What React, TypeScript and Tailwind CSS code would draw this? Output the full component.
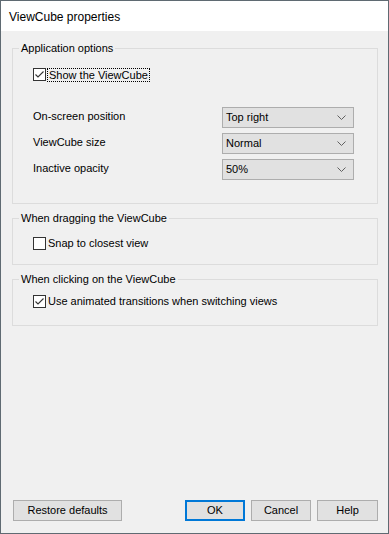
import React from 'react'

const font = { fontFamily: '"Liberation Sans", Arial, sans-serif' }

function CheckBox({ checked }: { checked: boolean }) {
  return (
    <span className="w-[13px] h-[13px] border border-[#333333] bg-white flex items-center justify-center shrink-0">
      {checked && (
        <svg width="11" height="11" viewBox="0 0 11 11">
          <path d="M1.5 5.5 L4 8 L9.5 2.5" fill="none" stroke="#333333" strokeWidth="1.1" />
        </svg>
      )}
    </span>
  )
}

function Select({ value }: { value: string }) {
  return (
    <div className="w-[132px] h-[21px] border border-[#adadad] bg-[#e1e1e1] flex items-center justify-between pl-[3px] pr-[7px]">
      <span>{value}</span>
      <svg width="9" height="6" viewBox="0 0 9 6">
        <path d="M0.5 0.5 L4.5 4.5 L8.5 0.5" fill="none" stroke="#606060" strokeWidth="1" />
      </svg>
    </div>
  )
}

function Group({ title, children }: { title: string; children: React.ReactNode }) {
  return (
    <fieldset className="ml-[11px] w-[366px] border border-[#dcdcdc]">
      <legend className="ml-[6px] px-[2px] h-[16px] leading-[16px]">{title}</legend>
      {children}
    </fieldset>
  )
}

export default function App() {
  const rows = [
    { label: 'On-screen position', value: 'Top right' },
    { label: 'ViewCube size', value: 'Normal' },
    { label: 'Inactive opacity', value: '50%' },
  ]

  return (
    <div
      className="w-[389px] h-[534px] border border-[#5f6a72] bg-[#f0f0f0] flex flex-col text-[11px] text-black"
      style={font}
    >
      {/* Title bar */}
      <div className="h-[30px] bg-white flex items-center pl-[8px] pt-[1px]">
        <span className="text-[12px]">ViewCube properties</span>
      </div>

      <div className="flex-1 flex flex-col pt-[9px]">
        <Group title="Application options">
          <div className="pl-[20px] pt-[12px] pb-[23px]">
            <div className="flex items-center gap-[1px] h-[13px]">
              <CheckBox checked />
              <span className="border border-dotted border-black px-px leading-[12px]">Show the ViewCube</span>
            </div>
            <div className="mt-[26px] flex flex-col gap-[5px]">
              {rows.map((r) => (
                <div key={r.label} className="flex items-center h-[21px]">
                  <span className="w-[189px] -mt-[2px]">{r.label}</span>
                  <Select value={r.value} />
                </div>
              ))}
            </div>
          </div>
        </Group>

        <div className="mt-[6px]">
          <Group title="When dragging the ViewCube">
            <div className="pl-[20px] pt-[11px] pb-[14px] h-[38px] flex items-start gap-[2px]">
              <CheckBox checked={false} />
              <span className="leading-[13px]">Snap to closest view</span>
            </div>
          </Group>
        </div>

        <div className="mt-[6px]">
          <Group title="When clicking on the ViewCube">
            <div className="pl-[20px] pt-[8px] pb-[17px] h-[38px] flex items-start gap-[2px]">
              <CheckBox checked />
              <span className="leading-[13px]">Use animated transitions when switching views</span>
            </div>
          </Group>
        </div>

        <div className="mt-auto mb-[12px] flex items-center pl-[12px]">
          <button className="w-[109px] h-[21px] border border-[#adadad] bg-[#e1e1e1]">Restore defaults</button>
          <button className="ml-[63px] w-[60px] h-[21px] border-2 border-[#0078d7] bg-[#e1e1e1]">OK</button>
          <button className="ml-[6px] w-[60px] h-[21px] border border-[#adadad] bg-[#e1e1e1]">Cancel</button>
          <button className="ml-[6px] w-[61px] h-[21px] border border-[#adadad] bg-[#e1e1e1]">Help</button>
        </div>
      </div>
    </div>
  )
}
